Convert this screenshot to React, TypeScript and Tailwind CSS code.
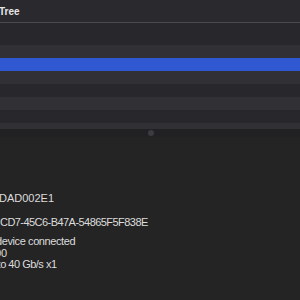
const rows = ['dark', 'light', 'sel', 'light', 'dark', 'light', 'dark', 'light'];

function Row({ kind }: { kind: string }) {
  const bg =
    kind === 'sel' ? 'bg-[#3059d1]' : kind === 'light' ? 'bg-[#313035]' : 'bg-[#28272c]';
  return <div className={`h-[13px] ${bg}`} />;
}

export default function App() {
  return (
    <div
      className="w-[300px] h-[300px] overflow-hidden flex flex-col bg-[#242424] text-[#dcdcdc]"
      style={{ fontFamily: '"Liberation Sans", Arial, sans-serif' }}
    >
      {/* tree header */}
      <div className="h-[23px] shrink-0 bg-[#2a292e] flex items-center border-b border-[#4b4a4f]">
        <span className="-ml-[1px] text-[10px] font-bold text-[#e6e6e6]">Tree</span>
      </div>

      {/* tree rows */}
      <div className="h-[106px] shrink-0 bg-[#28272c] overflow-hidden pt-[9px]">
        {rows.map((r, i) => (
          <Row key={i} kind={r} />
        ))}
      </div>

      {/* splitter */}
      <div className="h-[8px] shrink-0 bg-[#212023] flex items-center justify-center">
        <div className="w-[6px] h-[6px] rounded-full bg-[#3c3b3f] ml-[1px]" />
      </div>

      {/* details */}
      <div className="flex flex-col text-[11px] leading-[12px] pt-[55px] whitespace-nowrap">
        <div className="-ml-[1px]">DAD002E1</div>
        <div className="mt-[12px] tracking-[-0.55px]">CD7-45C6-B47A-54865F5F838E</div>
        <div className="mt-[8px] leading-[11.5px] -ml-[4px] tracking-[-0.4px]">device connected</div>
        <div className="leading-[11.5px] -ml-[5px]">00</div>
        <div className="leading-[11.5px] -ml-[18px] tracking-[-0.5px]">Up to 40 Gb/s x1</div>
      </div>
    </div>
  );
}
